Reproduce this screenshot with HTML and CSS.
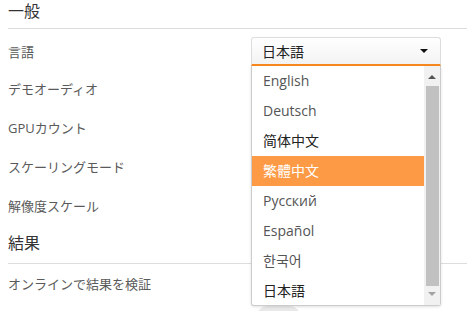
FILE: index.html
```html
<!DOCTYPE html>
<html lang="ja">
<head>
    <meta charset="UTF-8">
    <meta name="viewport" content="width=device-width, initial-scale=1.0">
    <title>設定</title>
    <link rel="stylesheet" href="styles.css">
</head>
<body>

    <div class="section">
        <h2 class="section-title">一般</h2>

        <div class="row row-first">
            <span class="label">言語</span>
            <div class="select">
                <div class="select-box">
                    <span>日本語</span>
                    <span class="caret"></span>
                </div>
                <div class="dropdown">
                    <ul class="options">
                        <li class="latin">English</li>
                        <li class="latin">Deutsch</li>
                        <li>简体中文</li>
                        <li class="selected">繁體中文</li>
                        <li class="latin">Русский</li>
                        <li class="latin">Español</li>
                        <li class="ko">한국어</li>
                        <li>日本語</li>
                    </ul>
                    <div class="scrollbar">
                        <span class="scroll-up"></span>
                        <span class="thumb"></span>
                        <span class="scroll-down"></span>
                    </div>
                </div>
            </div>
        </div>
        <div class="row"><span class="label">デモオーディオ</span></div>
        <div class="row"><span class="label">GPUカウント</span></div>
        <div class="row"><span class="label">スケーリングモード</span></div>
        <div class="row"><span class="label">解像度スケール</span></div>
    </div>

    <div class="section">
        <h2 class="section-title">結果</h2>
        <div class="row"><span class="label">オンラインで結果を検証</span></div>
        <div class="row row-last">
            <span class="label"></span>
            <span class="toggle"></span>
        </div>
    </div>

</body>
</html>
```

FILE: styles.css
```css
body {
    font-family: "Open Sans", "Noto Sans CJK JP", sans-serif;
    margin: 0;
    padding-left: 8px;
    background-color: #fff;
    color: #555;
    overflow: hidden;
    height: 311px;
}

.section-title {
    margin: 0;
    font-size: 16px;
    font-weight: normal;
    line-height: 22px;
    color: #333;
    padding: 0 0 6px;
    border-bottom: 1px solid #ddd;
}

.section + .section .section-title {
    padding: 7px 0 9px;
}

.row {
    display: grid;
    grid-template-columns: 243px 190px;
    align-items: center;
    height: 39px;
    font-size: 13px;
}

.row-first {
    height: 40px;
    padding-top: 8px;
    padding-bottom: 3px;
    box-sizing: border-box;
}

.row-last {
    align-items: start;
    padding-top: 3px;
    box-sizing: border-box;
}

.label {
    color: #5a5a5a;
}

/* Выпадающий список */
.select {
    position: relative;
    height: 29px;
}

.select-box {
    box-sizing: border-box;
    height: 29px;
    display: flex;
    align-items: center;
    justify-content: space-between;
    padding: 0 10px 0 10px;
    border: 1px solid #ddd;
    border-bottom: 2px solid #f7891f;
    border-radius: 3px 3px 0 0;
    background: linear-gradient(#fff, #f3f3f3);
    font-size: 14px;
    color: #222;
}

.caret {
    width: 0;
    height: 0;
    margin-right: 2px;
    border-left: 4px solid transparent;
    border-right: 4px solid transparent;
    border-top: 4px solid #111;
}

.dropdown {
    position: absolute;
    top: 29px;
    left: 0;
    width: 190px;
    height: 240px;
    box-sizing: border-box;
    display: flex;
    background: #fff;
    border: 1px solid #ccc;
    border-top: none;
    border-radius: 0 0 3px 3px;
    box-shadow: 0 1px 3px rgba(0, 0, 0, 0.12);
    z-index: 2;
}

.options {
    list-style: none;
    margin: 0;
    padding: 0;
    flex: 1;
}

.options li {
    height: 30px;
    line-height: 30px;
    padding-left: 11px;
    font-size: 14px;
    color: #222;
}

.options li.latin {
    color: #555;
}

.options li.ko {
    color: #555;
}

.options li.selected {
    background-color: #fd9a45;
    color: #fff;
}

.scrollbar {
    width: 16px;
    display: flex;
    flex-direction: column;
    align-items: center;
    background: #f1f1f1;
}

.scroll-up,
.scroll-down {
    width: 0;
    height: 0;
    border-left: 4px solid transparent;
    border-right: 4px solid transparent;
}

.scroll-up {
    margin: 9px 0 7px;
    border-bottom: 4px solid #555;
}

.scroll-down {
    margin-top: 6px;
    border-top: 4px solid #a3a3a3;
}

.thumb {
    width: 13px;
    height: 200px;
    background: #c1c1c1;
}

.toggle {
    width: 43px;
    height: 20px;
    margin-left: 6px;
    border-radius: 10px;
    background: #e9e9e9;
}
```
